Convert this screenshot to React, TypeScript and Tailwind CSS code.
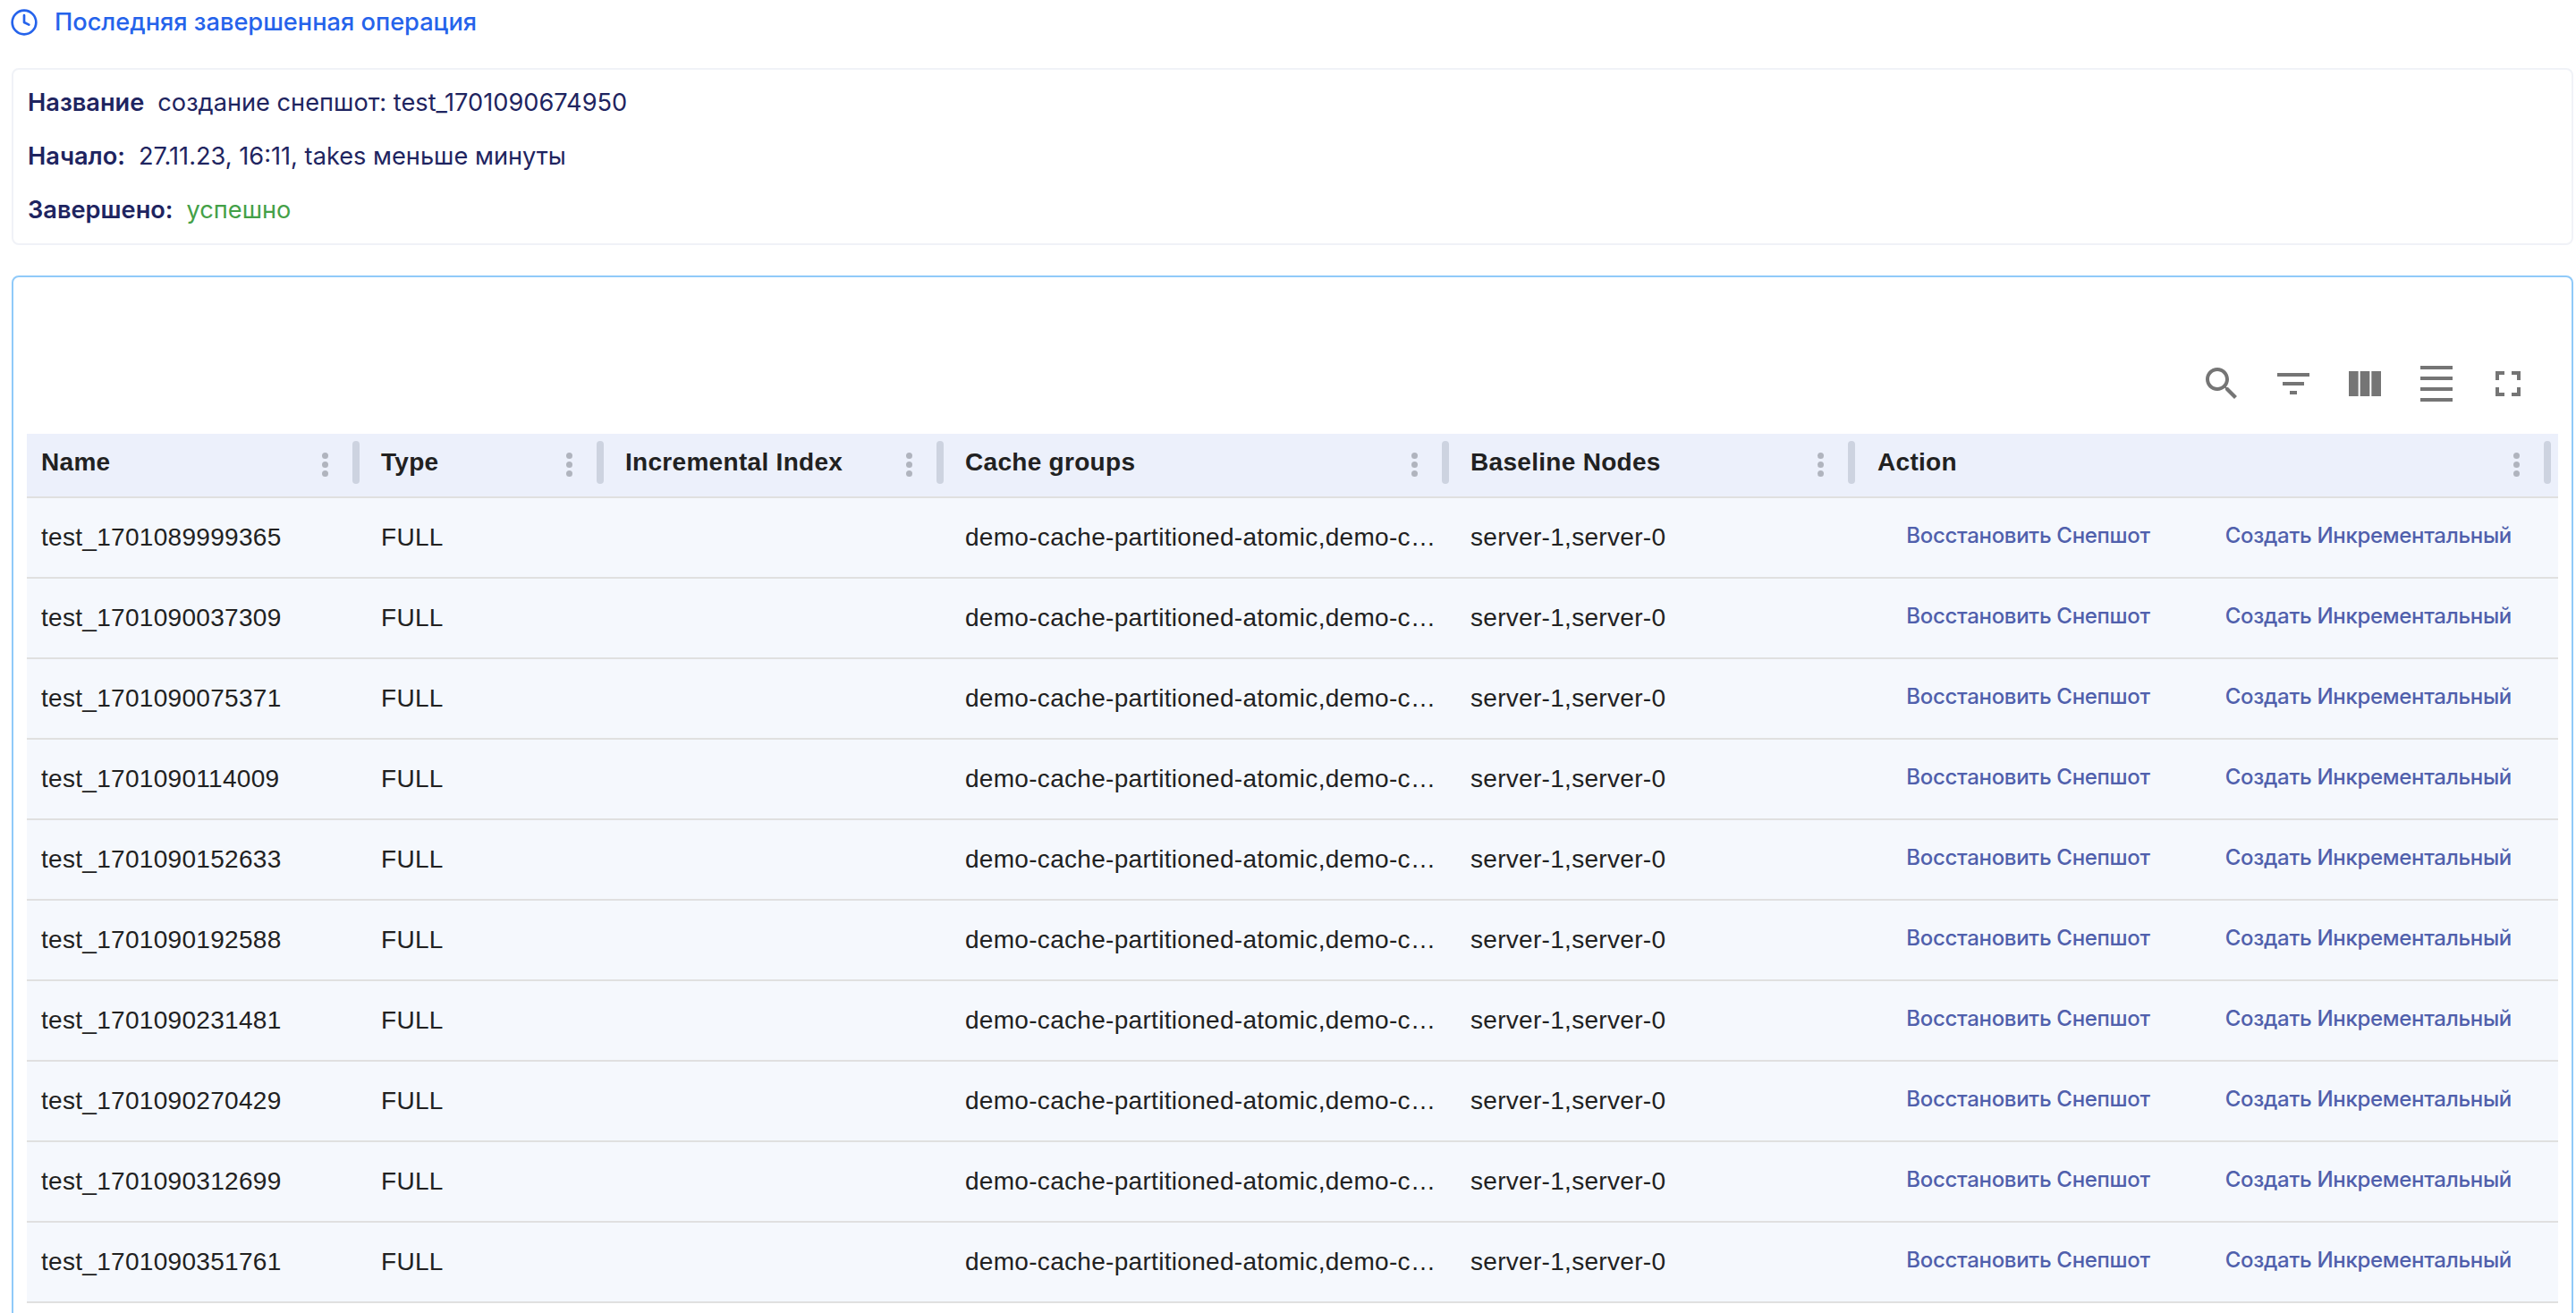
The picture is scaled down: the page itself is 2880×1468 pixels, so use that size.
import { Clock } from "lucide-react";

const rows = [
  "test_1701089999365",
  "test_1701090037309",
  "test_1701090075371",
  "test_1701090114009",
  "test_1701090152633",
  "test_1701090192588",
  "test_1701090231481",
  "test_1701090270429",
  "test_1701090312699",
  "test_1701090351761",
];

const columns = [
  { name: "Name", width: "w-[380px] pl-4" },
  { name: "Type", width: "w-[273px] pl-4" },
  { name: "Incremental Index", width: "w-[380px] pl-4" },
  { name: "Cache groups", width: "w-[565px] pl-4" },
  { name: "Baseline Nodes", width: "w-[454px] pl-4" },
  { name: "Action", width: "w-[778px] pl-[17px]" },
];

const toolbarIcons = [
  "M15.5 14h-.79l-.28-.27C15.41 12.59 16 11.11 16 9.5 16 5.91 13.09 3 9.5 3S3 5.91 3 9.5 5.91 16 9.5 16c1.61 0 3.09-.59 4.23-1.57l.27.28v.79l5 4.99L20.49 19l-4.99-5zm-6 0C7.01 14 5 11.99 5 9.5S7.01 5 9.5 5 14 7.01 14 9.5 11.99 14 9.5 14z",
  "M10 18h4v-2h-4v2zM3 6v2h18V6H3zm3 7h12v-2H6v2z",
  "M14.67 5v14H9.33V5h5.34zm1 14H21V5h-5.33v14zm-7.34 0V5H3v14h5.33z",
  "M3 2h18v2H3zm0 18h18v2H3zm0-6h18v2H3zm0-6h18v2H3z",
  "M7 14H5v5h5v-2H7v-3zm-2-4h2V7h3V5H5v5zm12 7h-3v2h5v-5h-2v3zM14 5v2h3v3h2V5h-5z",
];

function HeaderCell({ name, width }: { name: string; width: string }) {
  return (
    <div className={`${width} shrink-0 h-full flex items-center pr-[8px]`}>
      <span className="flex-1 -mt-[6px] text-[28px] font-bold text-[#212121] tracking-[0.3px] font-['Liberation_Sans',sans-serif]">
        {name}
      </span>
      <div className="flex flex-col gap-[3px] mr-[27px] -mt-[2px]">
        <span className="w-[7px] h-[7px] rounded-full bg-[#b0b4be]" />
        <span className="w-[7px] h-[7px] rounded-full bg-[#b0b4be]" />
        <span className="w-[7px] h-[7px] rounded-full bg-[#b0b4be]" />
      </div>
      <div className="w-[8px] h-[48px] -mt-[6px] rounded bg-[#cdd3e0]" />
    </div>
  );
}

function Row({ name }: { name: string }) {
  const cell = "shrink-0 pl-4 text-[28px] text-[#212121] tracking-[0.3px] font-['Liberation_Sans',sans-serif]";
  return (
    <div className="flex items-center h-[90px] bg-[#f5f8fd] border-b-2 border-[#e0e0e0]">
      <div className={`${cell} w-[380px]`}>{name}</div>
      <div className={`${cell} w-[273px]`}>FULL</div>
      <div className={`${cell} w-[380px]`} />
      <div className={`${cell} w-[565px]`}>demo-cache-partitioned-atomic,demo-c…</div>
      <div className={`${cell} w-[454px]`}>server-1,server-0</div>
      <div className="w-[778px] shrink-0 -mt-[4px] flex justify-end gap-[84px] pr-[52px] text-[24px] tracking-[-0.3px] font-medium text-[#5060ac] font-['Inter',sans-serif]">
        <button>Восстановить Снепшот</button>
        <button>Создать Инкрементальный</button>
      </div>
    </div>
  );
}

export default function App() {
  return (
    <div className="h-[1468px] overflow-hidden bg-white pl-[13px] pr-[3px] font-['Inter',sans-serif]">
      <div className="h-[76px] flex items-start pt-[9px]">
        <div className="flex items-center gap-[18px] h-[32px]">
          <Clock size={32} className="text-[#2563eb] -ml-[2px]" />
          <span className="text-[27.2px] font-medium text-[#2563eb]">Последняя завершенная операция</span>
        </div>
      </div>

      <div className="h-[198px] border-2 border-[#f0f2f7] rounded-lg px-[16px] py-[7px] flex flex-col text-[27.2px] text-[#1e2460]">
        <div className="h-[60px] shrink-0 flex items-center gap-[15px]">
          <span className="font-semibold">Название</span>
          <span>создание снепшот: test_1701090674950</span>
        </div>
        <div className="h-[60px] shrink-0 flex items-center gap-[15px]">
          <span className="font-semibold">Начало:</span>
          <span>27.11.23, 16:11, takes меньше минуты</span>
        </div>
        <div className="h-[60px] shrink-0 flex items-center gap-[15px]">
          <span className="font-semibold">Завершено:</span>
          <span className="text-[#43a047]">успешно</span>
        </div>
      </div>

      <div className="mt-[34px] border-2 border-[#90caf9] rounded-lg px-[15px] h-[1400px]">
        <div className="h-[175px] flex items-end justify-end pb-[32px]">
          <div className="flex pr-[32px] gap-[32px]">
            {toolbarIcons.map((d) => (
              <svg key={d} viewBox="0 0 24 24" className="w-[48px] h-[48px] fill-[#757575]">
                <path d={d} />
              </svg>
            ))}
          </div>
        </div>
        <div className="flex items-center h-[72px] bg-[#ecf0fb] border-b-2 border-[#e0e0e0]">
          {columns.map((c) => (
            <HeaderCell key={c.name} name={c.name} width={c.width} />
          ))}
        </div>
        {rows.map((r) => (
          <Row key={r} name={r} />
        ))}
      </div>
    </div>
  );
}
